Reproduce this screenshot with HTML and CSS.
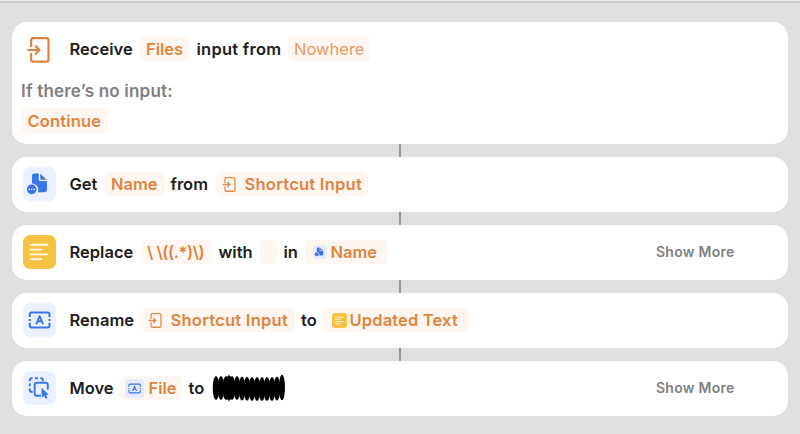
FILE: index.html
```html
<!DOCTYPE html>
<html lang="en">
<head>
<meta charset="utf-8">
<title>Shortcut</title>
<link rel="stylesheet" href="styles.css">
</head>
<body>
<svg class="defs" aria-hidden="true">
  <symbol id="input" viewBox="0 0 24 26"><g fill="none" stroke="currentColor" stroke-width="2.200" stroke-linecap="round" stroke-linejoin="round"><path d="M4.200 9.200V3.200Q4.200 1.200 6.200 1.200H19.300Q21.500 1.200 21.500 3.200V22.500Q21.500 24.700 19.300 24.700H6.200Q4.200 24.700 4.200 22.500V16.800"/><path d="M1.200 13H12M8.700 9.200L12.600 13L8.700 16.800"/></g></symbol>
  <symbol id="file" viewBox="0 0 34 34"><g fill="currentColor"><path d="M9.300 8.500Q9.300 6.200 11.600 6.200H16.200V12Q16.200 14 18.200 14H24.700V23Q24.700 25.400 22.300 25.400H15.300A6.500 6.500 0 0 0 9.300 16.500Z"/><path d="M17.800 6.500L24.400 12.700H18.800Q17.800 12.700 17.800 11.700Z"/><circle cx="9" cy="22.500" r="5"/></g><g fill="#e9f1fe"><circle cx="6.400" cy="22.500" r=".85"/><circle cx="9" cy="22.500" r=".85"/><circle cx="11.600" cy="22.500" r=".85"/></g></symbol>
  <symbol id="lines" viewBox="0 0 34 34"><path d="M7.500 9.500H25M7.500 14.500H19M7.500 19.500H25M7.500 24.500H19" stroke="#fff8e2" stroke-width="1.900" stroke-linecap="round"/></symbol>
  <symbol id="rename" viewBox="0 0 34 34"><g fill="none" stroke="currentColor" stroke-width="2.100" stroke-linecap="butt"><path d="M7 14V11.200Q7 9.200 9 9.200H25.300Q27.300 9.200 27.300 11.200V14M7 19.800V22.700Q7 24.700 9 24.700H25.300Q27.300 24.700 27.300 22.700V19.800"/><path d="M7 16V18M27.300 16V18"/><path d="M13.900 20.700L17.150 13.100L20.400 20.700M15 18.300H19.300" stroke-width="1.900" stroke-linecap="round" stroke-linejoin="round"/></g></symbol>
  <symbol id="move" viewBox="0 0 34 34"><g fill="none" stroke="currentColor" stroke-width="2"><path d="M7 10V9Q7 7 9 7H10M12.300 7H15.500M17.800 7H18.500Q20.500 7 20.500 9V10M7 12V15.300M7 17.500V19Q7 21 9 21H10"/><path d="M18.500 25H14Q12 25 12 23V13.500Q12 11.500 14 11.500H23.500Q25.500 11.500 25.500 13.500V18.500"/></g><path d="M19 16.500L26.500 24L23.800 24.200L25.300 27.200L23.300 28L22 25L19.500 27Z" fill="currentColor"/></symbol>
</svg>
<main class="workflow">
  <section class="card card-input">
    <div class="row">
      <span class="tile bare"><svg class="input-icon"><use href="#input"/></svg></span>
      <span class="word receive">Receive</span><span class="pill files">Files</span><span class="word input-from">input from</span><span class="pill nowhere">Nowhere</span>
    </div>
    <p class="fallback">If there’s no input:</p>
    <span class="pill continue">Continue</span>
  </section>
  <section class="card">
    <div class="row">
      <span class="tile blue"><svg><use href="#file"/></svg></span>
      <span class="word get">Get</span><span class="pill name">Name</span><span class="word from">from</span><span class="pill shortcut"><svg class="mini-input"><use href="#input"/></svg>Shortcut Input</span>
    </div>
  </section>
  <section class="card">
    <div class="row">
      <span class="tile yellow"><svg><use href="#lines"/></svg></span>
      <span class="word replace">Replace</span><span class="pill regex">\ \((.*)\)</span><span class="word with">with</span><span class="pill empty"></span><span class="word in">in</span><span class="pill name-var"><svg class="mini-file"><use href="#file"/></svg>Name</span>
      <span class="more">Show More</span>
    </div>
  </section>
  <section class="card">
    <div class="row">
      <span class="tile blue"><svg><use href="#rename"/></svg></span>
      <span class="word rename">Rename</span><span class="pill shortcut renamed"><svg class="mini-input"><use href="#input"/></svg>Shortcut Input</span><span class="word to">to</span><span class="pill updated"><svg class="mini-lines"><use href="#lines"/></svg>Updated Text</span>
    </div>
  </section>
  <section class="card">
    <div class="row">
      <span class="tile blue"><svg><use href="#move"/></svg></span>
      <span class="word move">Move</span><span class="pill file"><svg class="mini-rename"><use href="#rename"/></svg>File</span><span class="word to">to</span>
      <svg class="scribble" viewBox="0 0 74 28"><g><ellipse cx="4" cy="14" rx="3.300" ry="12"/><ellipse cx="9" cy="14" rx="3.300" ry="12"/><ellipse cx="14" cy="14" rx="3.300" ry="12"/><ellipse cx="17" cy="14" rx="3.500" ry="12.700"/><ellipse cx="20" cy="14" rx="3.300" ry="12"/><ellipse cx="25" cy="14" rx="3.300" ry="12"/><ellipse cx="30" cy="14.500" rx="3.300" ry="12"/><ellipse cx="35" cy="14.800" rx="3.300" ry="12"/><ellipse cx="40" cy="15" rx="3.300" ry="12"/><ellipse cx="45" cy="15" rx="3.300" ry="12"/><ellipse cx="50" cy="15" rx="3.300" ry="12"/><ellipse cx="55" cy="15" rx="3.300" ry="12"/><ellipse cx="60" cy="15" rx="3.300" ry="12"/><ellipse cx="65" cy="14.500" rx="3.300" ry="12"/><ellipse cx="70" cy="13.500" rx="3" ry="12.700"/></g></svg>
      <span class="more">Show More</span>
    </div>
  </section>
</main>
</body>
</html>
```
FILE: styles.css
```css
* { box-sizing: border-box; }
body {
  margin: 0;
  height: 434px;
  overflow: hidden;
  border-top: 1px solid #ececec;
  background: #e0e0e0;
  font: 600 16.5px/24px Inter, sans-serif;
  color: #202020;
}
.defs { display: none; }
.workflow {
  display: flex;
  flex-direction: column;
  gap: 13px;
  border-top: 2px solid #cccdcf;
  padding: 19px 12px 0;
}
.card {
  position: relative;
  height: 55px;
  padding: 10px 11px;
  border-radius: 15px;
  background: #fff;
}
.card-input { height: 122px; padding: 10px 9px; }
.card-input .row { padding-left: 2px; }
.card:not(:last-child)::after {
  content: "";
  position: absolute;
  top: 100%;
  left: 387px;
  width: 2px;
  height: 13px;
  background: #969698;
}
.row { display: flex; align-items: center; height: 34px; white-space: nowrap; }
.tile { flex: none; display: flex; width: 33px; height: 34px; margin-right: 13.5px; border-radius: 7px; }
.tile svg { width: 33px; height: 34px; }
.tile .input-icon { width: 24px; height: 26px; margin: 4.5px 0 0 4px; }
.bare { color: #df8241; }
.blue { background: #e9f1fe; color: #3975e9; }
.yellow { background: #f5c242; }
.word { flex: none; }
.pill {
  flex: none;
  display: flex;
  align-items: center;
  height: 24px;
  padding-left: 6.5px;
  margin: 0 7px;
  border-radius: 5px;
  background: #fef6f0;
  color: #df8542;
}
.receive { width: 63px; }
.files { width: 50px; }
.input-from { width: 84px; letter-spacing: .25px; }
.nowhere { width: 82px; font-weight: 400; color: #e49b69; }
.fallback { margin: 12px 0 6px; padding-top: 1px; color: #808080; height: 25px; line-height: 24px; font-size: 17px; letter-spacing: .2px; }
.continue { width: 87px; height: 25px; margin: -1px 0 0; letter-spacing: .15px; }
.get { width: 28px; }
.name { width: 60px; margin-right: 6px; }
.from { width: 38px; }
.shortcut { width: 152px; letter-spacing: .25px; }
.mini-input { width: 15px; height: 15px; margin-right: 7.5px; color: #e08b4e; }
.replace { width: 65px; }
.regex { width: 70px; letter-spacing: -.45px; padding-left: 5.5px; }
.with { width: 35px; }
.empty { width: 17px; margin: 0 7px 0 6px; }
.in { width: 14px; }
.name-var { width: 82px; padding-left: 8px; }
.mini-file, .mini-lines, .mini-rename { border-radius: 3px; background: #e6eafb; color: #3975e9; }
.mini-file { width: 14px; height: 14px; margin-right: 4px; }
.rename { width: 65px; }
.renamed { width: 153px; margin-right: 6.5px; }
.to { width: 16px; }
.updated { width: 146px; margin-left: 6px; padding-left: 9px; letter-spacing: .15px; }
.mini-lines { width: 15px; height: 15px; margin-right: 3px; margin-left: -.5px; background: #f5c242; }
.move { width: 43px; }
.file { width: 62px; }
.mini-rename { width: 19px; height: 19px; margin-right: 5px; margin-left: -1.5px; }
.scribble { width: 74px; height: 28px; margin-left: 7px; }
.more { width: 79px; margin: 0 42px 0 auto; font-size: 14px; letter-spacing: .25px; color: #808080; }
```
